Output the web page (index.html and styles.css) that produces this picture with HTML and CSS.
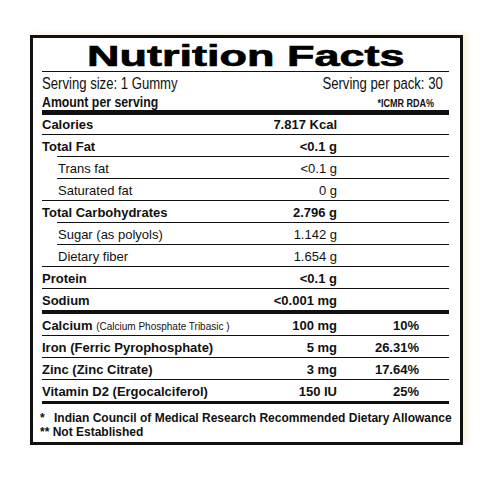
FILE: index.html
```html
<!DOCTYPE html>
<html lang="en">
<head>
    <meta charset="UTF-8">
    <meta name="viewport" content="width=device-width, initial-scale=1.0">
    <title>Nutrition Facts</title>
    <link rel="stylesheet" href="styles.css">
</head>
<body>
    <div class="label">
        <div class="title"><span>Nutrition Facts</span></div>

        <div class="serving">
            <span class="narrow left">Serving size: 1 Gummy</span>
            <span class="narrow right">Serving per pack: 30</span>
        </div>
        <div class="amount">
            <span class="narrow left">Amount per serving</span>
            <span class="narrow right rda">*ICMR RDA%</span>
        </div>

        <div class="facts">
            <div class="row calories">
                <span>Calories</span><b class="val">7.817 Kcal</b><span></span>
            </div>

            <div class="group">
                <div class="row">
                    <span>Total Fat</span><b class="val">&lt;0.1 g</b><span></span>
                </div>
                <div class="row sub">
                    <span>Trans fat</span><span class="val">&lt;0.1 g</span><span></span>
                </div>
                <div class="row sub">
                    <span>Saturated fat</span><span class="val">0 g</span><span></span>
                </div>
            </div>

            <div class="group">
                <div class="row">
                    <span>Total Carbohydrates</span><b class="val">2.796 g</b><span></span>
                </div>
                <div class="row sub">
                    <span>Sugar (as polyols)</span><span class="val">1.142 g</span><span></span>
                </div>
                <div class="row sub">
                    <span>Dietary fiber</span><span class="val">1.654 g</span><span></span>
                </div>
            </div>

            <div class="row line">
                <span>Protein</span><b class="val">&lt;0.1 g</b><span></span>
            </div>
            <div class="row heavy">
                <span>Sodium</span><b class="val">&lt;0.001 mg</b><span></span>
            </div>

            <div class="row line bold">
                <span>Calcium <small>(Calcium Phosphate Tribasic )</small></span><span class="val">100 mg</span><span class="pct">10%</span>
            </div>
            <div class="row line bold">
                <span>Iron (Ferric Pyrophosphate)</span><span class="val">5 mg</span><span class="pct">26.31%</span>
            </div>
            <div class="row line bold">
                <span>Zinc (Zinc Citrate)</span><span class="val">3 mg</span><span class="pct">17.64%</span>
            </div>
            <div class="row last bold">
                <span>Vitamin D2 (Ergocalciferol)</span><span class="val">150 IU</span><span class="pct">25%</span>
            </div>
        </div>

        <div class="notes">
            <p><span class="star">*</span>Indian Council of Medical Research Recommended Dietary Allowance</p>
            <p>** Not Established</p>
        </div>
    </div>
</body>
</html>
```

FILE: styles.css
```css
body {
    margin: 0;
    background: white;
    font-family: "Liberation Sans", Arial, sans-serif;
    color: #111;
}
.label {
    width: 407px;
    height: 404px;
    margin: 35px 0 0 30px;
    border: 3px solid #111;
    padding: 0 11px 0 9px;
    box-shadow: 5px -2px 4px rgba(245, 215, 175, 0.35);
}
.title {
    text-align: center;
    padding-top: 3px;
    height: 30px;
    line-height: 30px;
    border-bottom: 1.5px solid #111;
}
.title span {
    display: inline-block;
    font-size: 30px;
    font-weight: bold;
    color: #000;
    transform: scaleX(1.5);
    -webkit-text-stroke: 0.7px #000;
}
/* condensed look: no narrow face installed, so squeeze the sans */
.narrow {
    display: inline-block;
    white-space: nowrap;
    transform: scaleX(0.82);
}
.narrow.left {
    transform-origin: left center;
}
.narrow.right {
    transform-origin: right center;
}
.serving {
    display: flex;
    justify-content: space-between;
    margin-top: 3px;
    padding-right: 6px;
    font-size: 16px;
    line-height: 18px;
}
.amount {
    display: flex;
    justify-content: space-between;
    align-items: baseline;
    padding-right: 15px;
    height: 17px;
    line-height: 17px;
    font-size: 15px;
    font-weight: bold;
    border-bottom: 5px solid #111;
}
.amount .rda {
    font-size: 11px;
}
.row {
    display: grid;
    grid-template-columns: 1fr 100px 82px;
    padding-right: 30px;
    height: 19px;
    padding-top: 2px;
    line-height: 19px;
    font-size: 13px;
}
.row > span:first-child {
    white-space: nowrap;
}
.row .val,
.row .pct {
    text-align: right;
}
.row.calories {
    height: 19px;
    padding-top: 0;
    font-weight: bold;
    border-bottom: 1px solid #111;
}
.group {
    border-bottom: 1px solid #111;
}
.group > .row:first-child {
    font-weight: bold;
}
.row.sub {
    margin-left: 15px;
    padding-left: 1px;
    border-top: 1px solid #111;
}
.row.line {
    border-bottom: 1px solid #111;
    font-weight: bold;
}
.row.heavy {
    font-weight: bold;
    border-bottom: 4px solid #111;
}
.row.bold {
    font-weight: bold;
}
.row.last {
    border-bottom: 3px solid #111;
}
.row small {
    font-size: 10px;
    font-weight: normal;
}
.notes {
    margin: 7px -6px 0 -2px;
    font-size: 12px;
    font-weight: bold;
    line-height: 14px;
    white-space: nowrap;
}
.notes p {
    margin: 0;
}
.notes .star {
    display: inline-block;
    width: 14px;
}
```
